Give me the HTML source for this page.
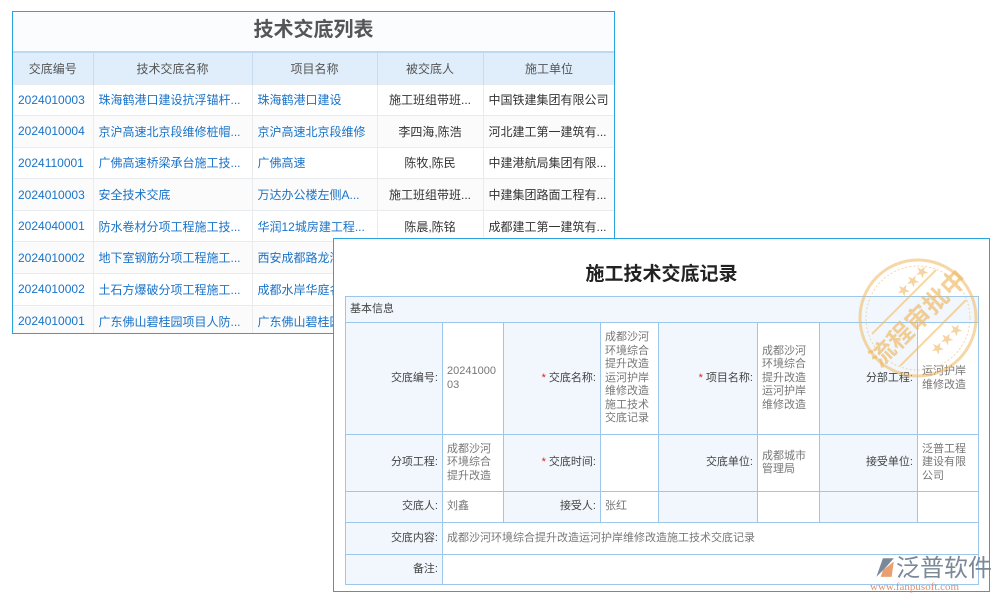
<!DOCTYPE html>
<html><head><meta charset="utf-8"><style>
*{margin:0;padding:0;box-sizing:border-box}
body{width:1000px;height:600px;background:#fff;position:relative;overflow:hidden;font-family:"Liberation Sans","Noto Sans CJK SC",sans-serif;font-size:12px;color:#333}
.list{position:absolute;left:12px;top:11px;width:603px;height:323px;border:1px solid #29a3e0;background:#fff;overflow:hidden}
.list .t{height:39px;line-height:37px;text-align:center;font-size:20px;font-weight:bold;color:#555;background:#fafcfe}
table{border-collapse:collapse;table-layout:fixed}
.list table{width:602px}
.list th{height:32px;background:#e0eefb;color:#555;font-weight:normal;border-right:1px solid #c9dcef;border-top:2px solid #bcd8f2}
.list td{height:31.6px;border-top:1px solid #e8ecef;border-right:1px solid #e8ecef;white-space:nowrap;overflow:hidden;padding-left:5px}
.list td.b{color:#1a73c9}
.list td.c{text-align:center;padding-left:0}
.list tr:nth-child(odd) td{background:#fbfbfb}
.det{position:absolute;left:333px;top:238px;width:657px;height:354px;border:1px solid #29a3e0;background:#fff}
.det .t{position:absolute;left:0;right:0;top:20px;text-align:center;font-size:19px;font-weight:bold;color:#222}
.det table{position:absolute;left:11px;top:57px;width:633px;border:1px solid #9cc6ea}
.det td{border:1px solid #9cc6ea;font-size:11px;color:#777;line-height:13.5px;vertical-align:middle;padding:0 4px}
.det td.l{background:#f1f7fd;text-align:right;color:#444}
.s{color:#e02020}
.hd td{background:#f1f7fd;height:26px;color:#444}
</style></head><body>
<div class="list">
<div class="t">技术交底列表</div>
<table>
<colgroup><col style="width:80px"><col style="width:159px"><col style="width:125px"><col style="width:106px"><col style="width:132px"></colgroup>
<tr><th>交底编号</th><th>技术交底名称</th><th>项目名称</th><th>被交底人</th><th>施工单位</th></tr>
<tr><td class="b">2024010003</td><td class="b">珠海鹤港口建设抗浮锚杆...</td><td class="b">珠海鹤港口建设</td><td class="c">施工班组带班...</td><td>中国铁建集团有限公司</td></tr>
<tr><td class="b">2024010004</td><td class="b">京沪高速北京段维修桩帽...</td><td class="b">京沪高速北京段维修</td><td class="c">李四海,陈浩</td><td>河北建工第一建筑有...</td></tr>
<tr><td class="b">2024110001</td><td class="b">广佛高速桥梁承台施工技...</td><td class="b">广佛高速</td><td class="c">陈牧,陈民</td><td>中建港航局集团有限...</td></tr>
<tr><td class="b">2024010003</td><td class="b">安全技术交底</td><td class="b">万达办公楼左侧A...</td><td class="c">施工班组带班...</td><td>中建集团路面工程有...</td></tr>
<tr><td class="b">2024040001</td><td class="b">防水卷材分项工程施工技...</td><td class="b">华润12城房建工程...</td><td class="c">陈晨,陈铭</td><td>成都建工第一建筑有...</td></tr>
<tr><td class="b">2024010002</td><td class="b">地下室钢筋分项工程施工...</td><td class="b">西安成都路龙湖</td><td></td><td></td></tr>
<tr><td class="b">2024010002</td><td class="b">土石方爆破分项工程施工...</td><td class="b">成都水岸华庭名</td><td></td><td></td></tr>
<tr><td class="b">2024010001</td><td class="b">广东佛山碧桂园项目人防...</td><td class="b">广东佛山碧桂园</td><td></td><td></td></tr>
</table>
</div>
<div class="det">
<div class="t">施工技术交底记录</div>
<table>
<colgroup><col style="width:97px"><col style="width:61px"><col style="width:97px"><col style="width:58px"><col style="width:99px"><col style="width:62px"><col style="width:98px"><col style="width:61px"></colgroup>
<tr class="hd"><td colspan="8">基本信息</td></tr>
<tr style="height:112px"><td class="l">交底编号:</td><td>20241000<br>03</td><td class="l"><span class="s">*</span> 交底名称:</td><td>成都沙河<br>环境综合<br>提升改造<br>运河护岸<br>维修改造<br>施工技术<br>交底记录</td><td class="l"><span class="s">*</span> 项目名称:</td><td>成都沙河<br>环境综合<br>提升改造<br>运河护岸<br>维修改造</td><td class="l">分部工程:</td><td>运河护岸<br>维修改造</td></tr>
<tr style="height:57px"><td class="l">分项工程:</td><td>成都沙河<br>环境综合<br>提升改造</td><td class="l"><span class="s">*</span> 交底时间:</td><td></td><td class="l">交底单位:</td><td>成都城市<br>管理局</td><td class="l">接受单位:</td><td>泛普工程<br>建设有限<br>公司</td></tr>
<tr style="height:31px"><td class="l">交底人:</td><td>刘鑫</td><td class="l">接受人:</td><td>张红</td><td class="l"></td><td></td><td class="l"></td><td></td></tr>
<tr style="height:32px"><td class="l">交底内容:</td><td colspan="7">成都沙河环境综合提升改造运河护岸维修改造施工技术交底记录</td></tr>
<tr style="height:30px"><td class="l">备注:</td><td colspan="7"></td></tr>
</table>
</div>
<svg style="position:absolute;left:856px;top:256px" width="124" height="124" viewBox="0 0 124 124">
<g opacity="0.55" fill="none" stroke="#f0b860">
<circle cx="62" cy="62" r="58" stroke-width="3"/>
<circle cx="62" cy="62" r="52" stroke-width="1" stroke-dasharray="2 2"/>
<line x1="16" y1="78" x2="80" y2="14" stroke-width="2"/>
<line x1="44" y1="110" x2="110" y2="44" stroke-width="2"/>
</g>
<text x="62" y="71" transform="rotate(-45 62 62)" text-anchor="middle" font-size="25" font-weight="bold" fill="#f0b860" opacity="0.65" font-family="Noto Sans CJK SC,sans-serif">流程审批中</text>
<text x="46" y="42" fill="#f0b860" opacity="0.6" font-size="13" transform="rotate(-45 46 42)">★★★</text>
<text x="80" y="100" fill="#f0b860" opacity="0.6" font-size="13" transform="rotate(-45 80 100)">★★★</text>
</svg>
<div style="position:absolute;left:872px;top:550px;width:125px;height:45px">
<svg style="position:absolute;left:0;top:5px" width="24" height="24" viewBox="0 0 22 22"><path d="M4 20 L10 3 L20 3 L12 12 Z" fill="#7a8898"/><path d="M10 14 L20 6 L18 20 L8 20 Z" fill="#e8a070"/></svg>
<div style="position:absolute;left:24px;top:0;font-size:24px;color:#7a8898;font-family:'Noto Sans CJK SC',sans-serif;line-height:32px">泛普软件</div>
<div style="position:absolute;left:-2px;top:31px;font-size:11px;color:#e0906a;font-family:'Liberation Serif',serif">www.fanpusoft.com</div>
</div>
</body></html>
